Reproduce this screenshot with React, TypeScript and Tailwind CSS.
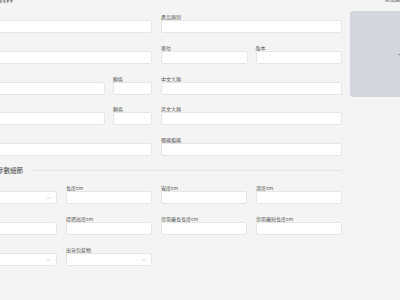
import React from "react";

type FieldProps = {
  label: string;
  select?: boolean;
};

function Field({ label, select }: FieldProps) {
  return (
    <div className="flex flex-col">
      <label className="h-[6px] whitespace-nowrap text-[5px] leading-[6px] text-[#555]">
        {label}
      </label>
      <div className="relative mt-0 flex h-[13px] items-center rounded-[2px] border border-[#e6e6e6] bg-white">
        {select && (
          <svg
            className="absolute right-[5px] h-[4px] w-[5px]"
            viewBox="0 0 10 6"
            fill="none"
            stroke="#b5b5b5"
            strokeWidth="1"
          >
            <path d="M1 1l4 4 4-4" />
          </svg>
        )}
      </div>
    </div>
  );
}

export default function App() {
  return (
    <div className="h-[300px] w-[400px] overflow-hidden bg-[#f4f4f4] font-['Noto_Sans_CJK_TC','Noto_Sans',sans-serif]">
      <div className="ml-[-29px] mt-[-6px] flex w-[480px] gap-[8px]">
        {/* form */}
        <div className="flex w-[371px] shrink-0 flex-col">
          <div className="h-[10px] text-[7px] leading-[10px] text-[#444]">
            產品基本資料
          </div>

          <div className="mt-[10px] grid grid-cols-2 gap-x-[9px] gap-y-[11.75px]">
            <Field label="品名" />
            <Field label="產品類別" />

            <Field label="型號" />
            <div className="grid grid-cols-2 gap-x-[8px]">
              <Field label="單位" />
              <Field label="版本" />
            </div>

            <div className="grid grid-cols-[1fr_39px] gap-x-[8px]">
              <Field label="中文" />
              <Field label="顏色" />
            </div>
            <Field label="中文大類" />

            <div className="grid grid-cols-[1fr_39px] gap-x-[8px]">
              <Field label="英文" />
              <Field label="顏色" />
            </div>
            <Field label="英文大類" />

            <Field label="備註" />
            <Field label="條碼編碼" />
          </div>

          <div className="mt-[9px] flex h-[10px] items-center gap-[9px]">
            <span className="whitespace-nowrap text-[6.5px] leading-[10px] text-[#444]">
              產品規格參數細節
            </span>
            <div className="h-px flex-1 bg-[#e2e2e2]" />
          </div>

          <div className="mt-[10px] grid grid-cols-4 gap-x-[9px] gap-y-[12px]">
            <Field label="材質" select />
            <Field label="長度cm" />
            <Field label="寬度cm" />
            <Field label="深度cm" />

            <Field label="重量g" />
            <Field label="提把高度cm" />
            <Field label="背帶最長長度cm" />
            <Field label="背帶最短長度cm" />

            <Field label="產地" select />
            <Field label="出貨包裝物" select />
          </div>
        </div>

        {/* image */}
        <div className="flex w-[100px] shrink-0 flex-col">
          <div className="h-[10px] text-center text-[5px] leading-[10px] text-[#555]">
            產品圖片上傳
          </div>
          <div className="mt-[7px] flex h-[86px] items-center justify-center rounded-[3px] bg-[#d3d6dc]">
            <svg
              className="h-[7px] w-[7px]"
              viewBox="0 0 24 24"
              fill="none"
              stroke="#6b7280"
              strokeWidth="2.5"
              strokeLinecap="round"
            >
              <path d="M12 5v14M5 12h14" />
            </svg>
          </div>
        </div>
      </div>
    </div>
  );
}
